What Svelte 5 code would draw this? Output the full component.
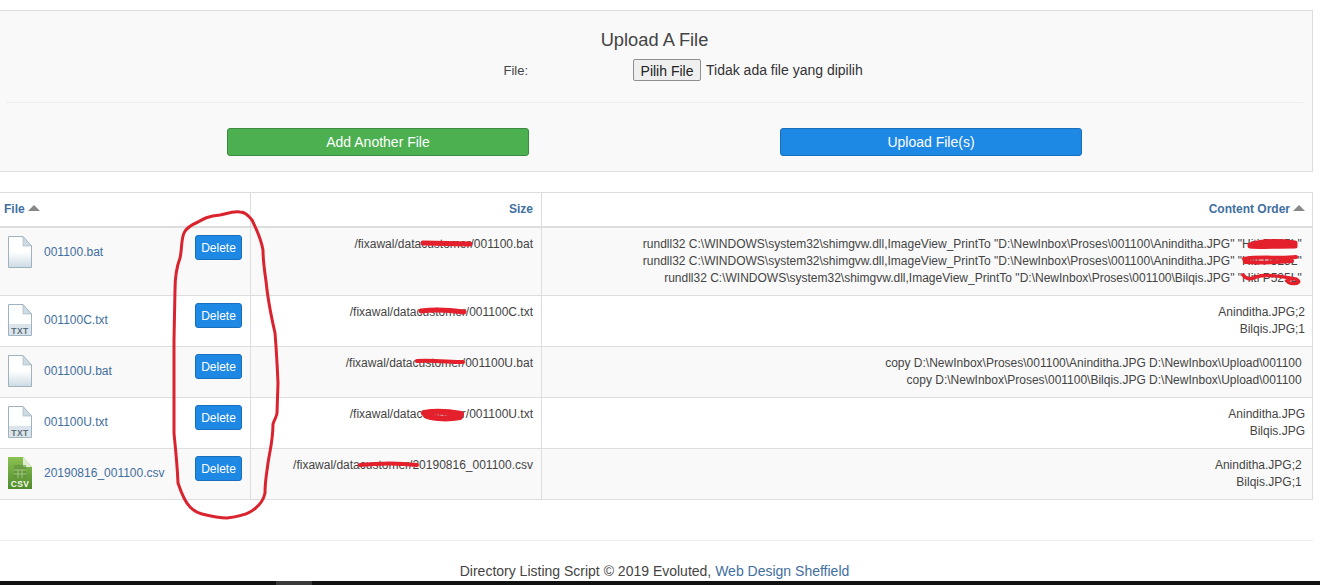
<script>
  const pre = "C:\\WINDOWS\\system32\\shimgvw.dll,ImageView_PrintTo";
  const inbox = "D:\\NewInbox\\Proses\\001100\\";
  const nbsp = "\u00a0";

  const files = [
    {
      name: "001100.bat",
      type: "blank",
      path: "/fixawal/datacustomer/001100.bat",
      lines: [
        `rundll32 ${pre} "${inbox}Aninditha.JPG" "Hiti P525L"${nbsp}`,
        `rundll32 ${pre} "${inbox}Aninditha.JPG" "Hiti P525L"${nbsp}`,
        `rundll32 ${pre} "${inbox}Bilqis.JPG" "Hiti P525L"${nbsp}`,
      ],
    },
    {
      name: "001100C.txt",
      type: "txt",
      path: "/fixawal/datacustomer/001100C.txt",
      lines: ["Aninditha.JPG;2", "Bilqis.JPG;1"],
    },
    {
      name: "001100U.bat",
      type: "blank",
      path: "/fixawal/datacustomer/001100U.bat",
      lines: [
        `copy ${inbox}Aninditha.JPG D:\\NewInbox\\Upload\\001100${nbsp}`,
        `copy ${inbox}Bilqis.JPG D:\\NewInbox\\Upload\\001100${nbsp}`,
      ],
    },
    {
      name: "001100U.txt",
      type: "txt",
      path: "/fixawal/datacustomer/001100U.txt",
      lines: ["Aninditha.JPG", "Bilqis.JPG"],
    },
    {
      name: "20190816_001100.csv",
      type: "csv",
      path: "/fixawal/datacustomer/20190816_001100.csv",
      lines: [`Aninditha.JPG;2${nbsp}`, `Bilqis.JPG;1${nbsp}`],
    },
  ];

  // marker scribbles drawn over the screenshot
  const scribbles = [
    { d: "M423 243 L470 244", w: 5 },
    { d: "M421 311 C435 309 450 310 464 312", w: 5 },
    { d: "M417 361 C432 360 450 362 463 362", w: 4 },
    { d: "M424 413 C435 411 450 412 461 414 L460 417 C450 419 435 419 427 416 Z", w: 6 },
    { d: "M360 465 C380 463 400 463 417 465", w: 4 },
    { d: "M1250 245 C1262 241 1280 241 1295 243 L1295 246 C1280 246 1262 247 1250 246 Z", w: 5 },
    { d: "M1244 259 C1260 256 1280 259 1296 257 M1245 262 C1260 263 1280 262 1292 261", w: 4 },
    { d: "M1243 275 C1246 279 1250 280 1256 277 C1265 274 1280 276 1295 279 C1302 281 1298 285 1290 283 C1284 281 1288 278 1296 279", w: 3.5 },
  ];
  const loop =
    "M240 212 C232 211 226 214 220 215 C208 216 203 219 198 222 C191 225 186 228 184 233 C181 240 182 250 180 258 C177 266 175 275 175 290 L174 340 L174 433 C175 445 177 460 178 483 C181 492 186 503 190 507 C195 512 198 513 202 514 C210 516 218 518 227 518 C235 517 245 515 250 512 C257 508 263 503 265 493 C265 480 267 472 268 463 C270 450 273 440 273 424 C275 418 277 416 277 413 L278 383 C277 360 276 345 275 333 C272 320 269 305 267 290 C266 278 263 265 263 250 C261 238 256 228 252 220 C248 215 245 212 240 212 Z";
</script>

{#snippet fileIcon(type, i)}
  <svg class="icon" width="24" height="32" viewBox="0 0 24 32">
    <defs>
      <linearGradient id="paper{i}" x1="0" y1="0" x2="0" y2="1">
        <stop offset="0.5" stop-color="#ffffff" />
        <stop offset="1" stop-color="#cddbe4" />
      </linearGradient>
      <linearGradient id="green{i}" x1="0" y1="0" x2="0" y2="1">
        <stop offset="0" stop-color="#8cc152" />
        <stop offset="1" stop-color="#4f8a2c" />
      </linearGradient>
    </defs>
    {#if type === "csv"}
      <path d="M0 0 H15 L24 10 V32 H0 Z" fill="url(#green{i})" />
      <path d="M15 0 L24 10 H15 Z" fill="#dfeccd" />
      <path d="M6 8 H18 V21 H6 Z" fill="#5d8f3a" opacity="0.6" />
      <path d="M6 13 H18 M6 17 H18 M10 13 V21 M14 13 V21" stroke="#a4c880" stroke-width="1" />
      <text x="12" y="29.5" class="badge white">CSV</text>
    {:else}
      <path
        d="M0.5 0.5 H15 L23.5 10 V31.5 H0.5 Z"
        fill={type === "txt" ? "#fdfefe" : `url(#paper${i})`}
        stroke="#9fb2bf"
      />
      <path d="M15 0.5 L23.5 10 H15 Z" fill="#cfdbe3" stroke="#9fb2bf" stroke-width="0.6" />
      {#if type === "txt"}
        <path d="M1 20 H23 V31 H1 Z" fill="#dbe4ea" />
        <text x="12" y="29.5" class="badge">TXT</text>
      {/if}
    {/if}
  </svg>
{/snippet}

<div class="page">
  <section class="upload">
    <h2>Upload A File</h2>
    <div class="field">
      <span class="label">File:</span>
      <button class="choose" type="button">Pilih File</button>
      <span class="none">Tidak ada file yang dipilih</span>
    </div>
    <hr />
    <div class="actions">
      <button class="wide green" type="button">Add Another File</button>
      <button class="wide blue" type="button">Upload File(s)</button>
    </div>
  </section>

  <table>
    <colgroup>
      <col class="c1" />
      <col class="c2" />
      <col />
    </colgroup>
    <thead>
      <tr>
        <th class="left"><a href="#file">File<i class="arrow"></i></a></th>
        <th><a href="#size">Size</a></th>
        <th class="last"><a href="#order">Content Order<i class="arrow"></i></a></th>
      </tr>
    </thead>
    <tbody>
      {#each files as f, i}
        <tr>
          <td class="left">
            <div class="name">
              {@render fileIcon(f.type, i)}
              <a href="#open">{f.name}</a>
              <button class="delete" type="button">Delete</button>
            </div>
          </td>
          <td>{f.path}</td>
          <td class="last">
            {#each f.lines as line}
              <div>{line}</div>
            {/each}
          </td>
        </tr>
      {/each}
    </tbody>
  </table>

  <footer>
    Directory Listing Script © 2019 Evoluted, <a href="#wds">Web Design Sheffield</a>
  </footer>
</div>
<div class="taskbar"><span></span></div>

<svg class="marks" width="1320" height="585" viewBox="0 0 1320 585" fill="none" stroke="#e3202c" stroke-linecap="round" stroke-linejoin="round">
  <path d={loop} stroke="#d9232e" stroke-width="3" />
  {#each scribbles as s}
    <path d={s.d} stroke-width={s.w} />
  {/each}
</svg>

<style>
  :global(body) {
    margin: 0;
    background: #fff;
    overflow: hidden;
  }
  .page {
    box-sizing: border-box;
    width: 1317px;
    height: 581px;
    margin-left: -4px;
    padding-top: 10px;
    font-family: "Liberation Sans", Arial, sans-serif;
    font-size: 12px;
    line-height: 17px;
    color: #444;
    overflow: hidden;
  }
  a {
    color: #3f6f9f;
    text-decoration: none;
  }

  .upload {
    box-sizing: border-box;
    height: 162px;
    padding: 19px 9px 0;
    background: #f9f9f9;
    border: 1px solid #ddd;
  }
  h2 {
    margin: 0;
    font-size: 18.3px;
    font-weight: 400;
    line-height: 20px;
    text-align: center;
    color: #444;
  }
  .field {
    display: flex;
    align-items: center;
    height: 22px;
    margin-top: 9px;
    font-size: 13px;
  }
  .label {
    width: 522px;
    text-align: right;
  }
  .choose {
    box-sizing: border-box;
    width: 68px;
    height: 22px;
    margin-left: 105px;
    padding: 1px 0 0;
    font: 14px "Liberation Sans", Arial, sans-serif;
    color: #222;
    background: #efefef;
    border: 1px solid #8f8f8f;
    border-radius: 2px;
  }
  .none {
    margin-left: 5px;
    padding-top: 1px;
    font-size: 14px;
    color: #333;
  }
  hr {
    margin: 21px 0 25px;
    border: 0;
    border-top: 1px solid #eee;
  }
  .actions {
    display: flex;
    justify-content: center;
    gap: 251px;
  }
  .wide {
    box-sizing: border-box;
    width: 302px;
    height: 28px;
    padding: 0;
    font: 14px "Liberation Sans", Arial, sans-serif;
    color: #fff;
    border-radius: 3px;
  }
  .green {
    background: #4caf50;
    border: 1px solid #3d8b40;
  }
  .blue {
    background: #1e88e5;
    border: 1px solid #1a6fbd;
  }

  table {
    width: 100%;
    margin-top: 20px;
    border-collapse: collapse;
    table-layout: fixed;
    border: 1px solid #ddd;
  }
  .c1 {
    width: 254px;
  }
  .c2 {
    width: 291px;
  }
  th,
  td {
    padding: 8px;
    text-align: right;
    vertical-align: top;
    border: 1px solid #ddd;
  }
  th {
    height: 17px;
    border-bottom: 2px solid #ddd;
  }
  th.left {
    text-align: left;
  }
  .left {
    padding-left: 7px;
  }
  .last {
    padding-right: 7px;
  }
  tbody tr:nth-child(odd) {
    background: #f9f9f9;
  }
  .arrow {
    display: inline-block;
    margin-left: 3px;
    vertical-align: 2px;
    border-left: 6px solid transparent;
    border-right: 6px solid transparent;
    border-bottom: 6px solid #888;
  }
  .name {
    display: flex;
    align-items: flex-start;
    text-align: left;
  }
  .icon {
    flex: none;
    margin-left: 4px;
  }
  .name a {
    margin-left: 12px;
    line-height: 32px;
  }
  .delete {
    box-sizing: border-box;
    width: 47px;
    height: 25px;
    margin-top: -1px;
    margin-left: auto;
    padding: 0;
    font: 12px "Liberation Sans", Arial, sans-serif;
    color: #fff;
    background: #1e88e5;
    border: 1px solid #1a6fbd;
    border-radius: 3px;
  }
  .badge {
    font: bold 8.5px "Liberation Sans", Arial, sans-serif;
    letter-spacing: 0.4px;
    text-anchor: middle;
    fill: #5c6f7c;
  }
  .badge.white {
    fill: #f2f8ea;
  }

  footer {
    margin-top: 40px;
    padding-top: 20px;
    border-top: 1px solid #eee;
    font-size: 14px;
    line-height: 20px;
    text-align: center;
    color: #444;
  }

  .taskbar {
    height: 4px;
    background: #111;
  }
  .taskbar span {
    display: block;
    width: 36px;
    height: 4px;
    margin-left: 276px;
    background: #3a3a3a;
  }
  .marks {
    position: absolute;
    top: 0;
    left: 0;
    pointer-events: none;
  }
</style>
